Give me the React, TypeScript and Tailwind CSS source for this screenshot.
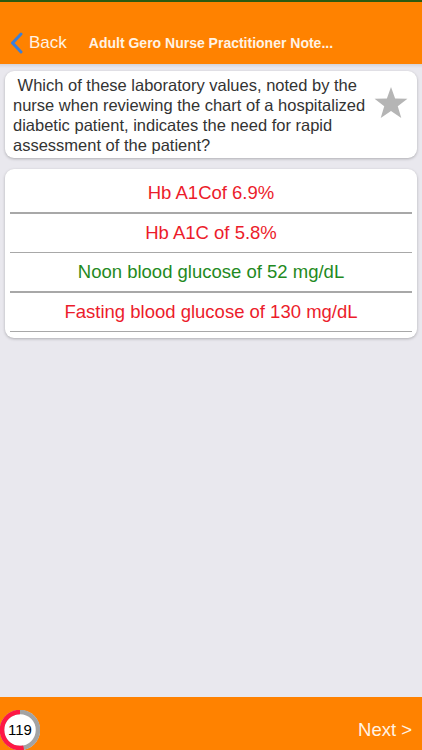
import React from 'react'

const options = [
  { text: 'Hb A1Cof 6.9%', correct: false },
  { text: 'Hb A1C of 5.8%', correct: false },
  { text: 'Noon blood glucose of 52 mg/dL', correct: true },
  { text: 'Fasting blood glucose of 130 mg/dL', correct: false },
]

function Timer({ value, fraction }: { value: number; fraction: number }) {
  const r = 18
  const c = 2 * Math.PI * r
  return (
    <div className="relative w-[40px] h-[40px]">
      <svg width="40" height="40" viewBox="0 0 40 40" className="absolute inset-0">
        <circle cx="20" cy="20" r="20" fill="#ffffff" />
        <circle cx="20" cy="20" r={r} fill="none" stroke="#a3a3a3" strokeWidth="4.5" />
        {/* red arc, runs counterclockwise from the top */}
        <circle
          cx="20"
          cy="20"
          r={r}
          fill="none"
          stroke="#ff1744"
          strokeWidth="4.5"
          strokeDasharray={`${c * fraction} ${c}`}
          transform="rotate(-90 20 20) scale(1 -1) translate(0 -40)"
        />
      </svg>
      <span className="absolute inset-0 flex items-center justify-center text-[15px] text-black">{value}</span>
    </div>
  )
}

export default function App() {
  return (
    <div className="h-[750px] w-[422px] flex flex-col bg-[#e9e8ee] font-['Liberation_Sans',Arial,sans-serif] overflow-hidden">
      {/* Header */}
      <div className="h-[2px] bg-[#2d5a10]" />
      <div className="h-[62px] bg-[#ff8200] pt-[20px]">
        <div className="h-[42px] flex items-center pl-[10px]">
          <svg width="13" height="22" viewBox="0 0 13 22" className="mr-[6px]">
            <path d="M11 2 L2.5 11 L11 20" fill="none" stroke="#3b7fd9" strokeWidth="3" strokeLinecap="round" strokeLinejoin="round" />
          </svg>
          <span className="text-[17px] text-[#fff3e4]">Back</span>
          <span className="ml-[22px] text-[14px] font-bold text-[#fff3e4]">Adult Gero Nurse Practitioner Note...</span>
        </div>
      </div>
      <div className="h-[4px] bg-gradient-to-b from-[#d4d3d9] to-[#e9e8ee]" />

      <div className="flex-1 px-[5px] pt-[3px]">
        {/* Question */}
        <div className="bg-white rounded-[9px] shadow-[0_1px_3px_rgba(0,0,0,0.25)] flex pl-[8px] pr-[9px] pt-[4px] pb-[3px]">
          <p className="flex-1 text-[16.5px] leading-[20px] text-[#333]">
            {'\u00a0'}Which of these laboratory values, noted by the nurse when reviewing the chart of a hospitalized diabetic patient, indicates the need for rapid assessment of the patient?
          </p>
          <svg width="34" height="31" viewBox="0.8 0.5 22.4 21.1" className="mt-[12px] shrink-0">
            <path d="M12 0.5 L14.8 8.3 L23.2 8.5 L16.6 13.6 L19 21.6 L12 16.9 L5 21.6 L7.4 13.6 L0.8 8.5 L9.2 8.3 Z" fill="#b5b5b5" />
          </svg>
        </div>

        {/* Answers */}
        <div className="mt-[11px] bg-white rounded-[9px] shadow-[0_1px_3px_rgba(0,0,0,0.25)] pt-[5px] pb-[6px]">
          {options.map((o) => (
            <div key={o.text}>
              <div
                className={`h-[38px] flex items-center justify-center text-[18.5px] ${o.correct ? 'text-[#1f8a22]' : 'text-[#ec1c2b]'}`}
              >
                {o.text}
              </div>
              <div className="mx-[5px] h-[1.5px] bg-[#a8a8a8]" />
            </div>
          ))}
        </div>
      </div>

      {/* Bottom bar */}
      <div className="h-[53px] bg-[#ff8200] pt-[13px]">
        <div className="h-[40px] flex items-center justify-between pr-[10px]">
          <Timer value={119} fraction={0.53} />
          <span className="text-[18.5px] text-[#fff3e4]">Next &gt;</span>
        </div>
      </div>
    </div>
  )
}
